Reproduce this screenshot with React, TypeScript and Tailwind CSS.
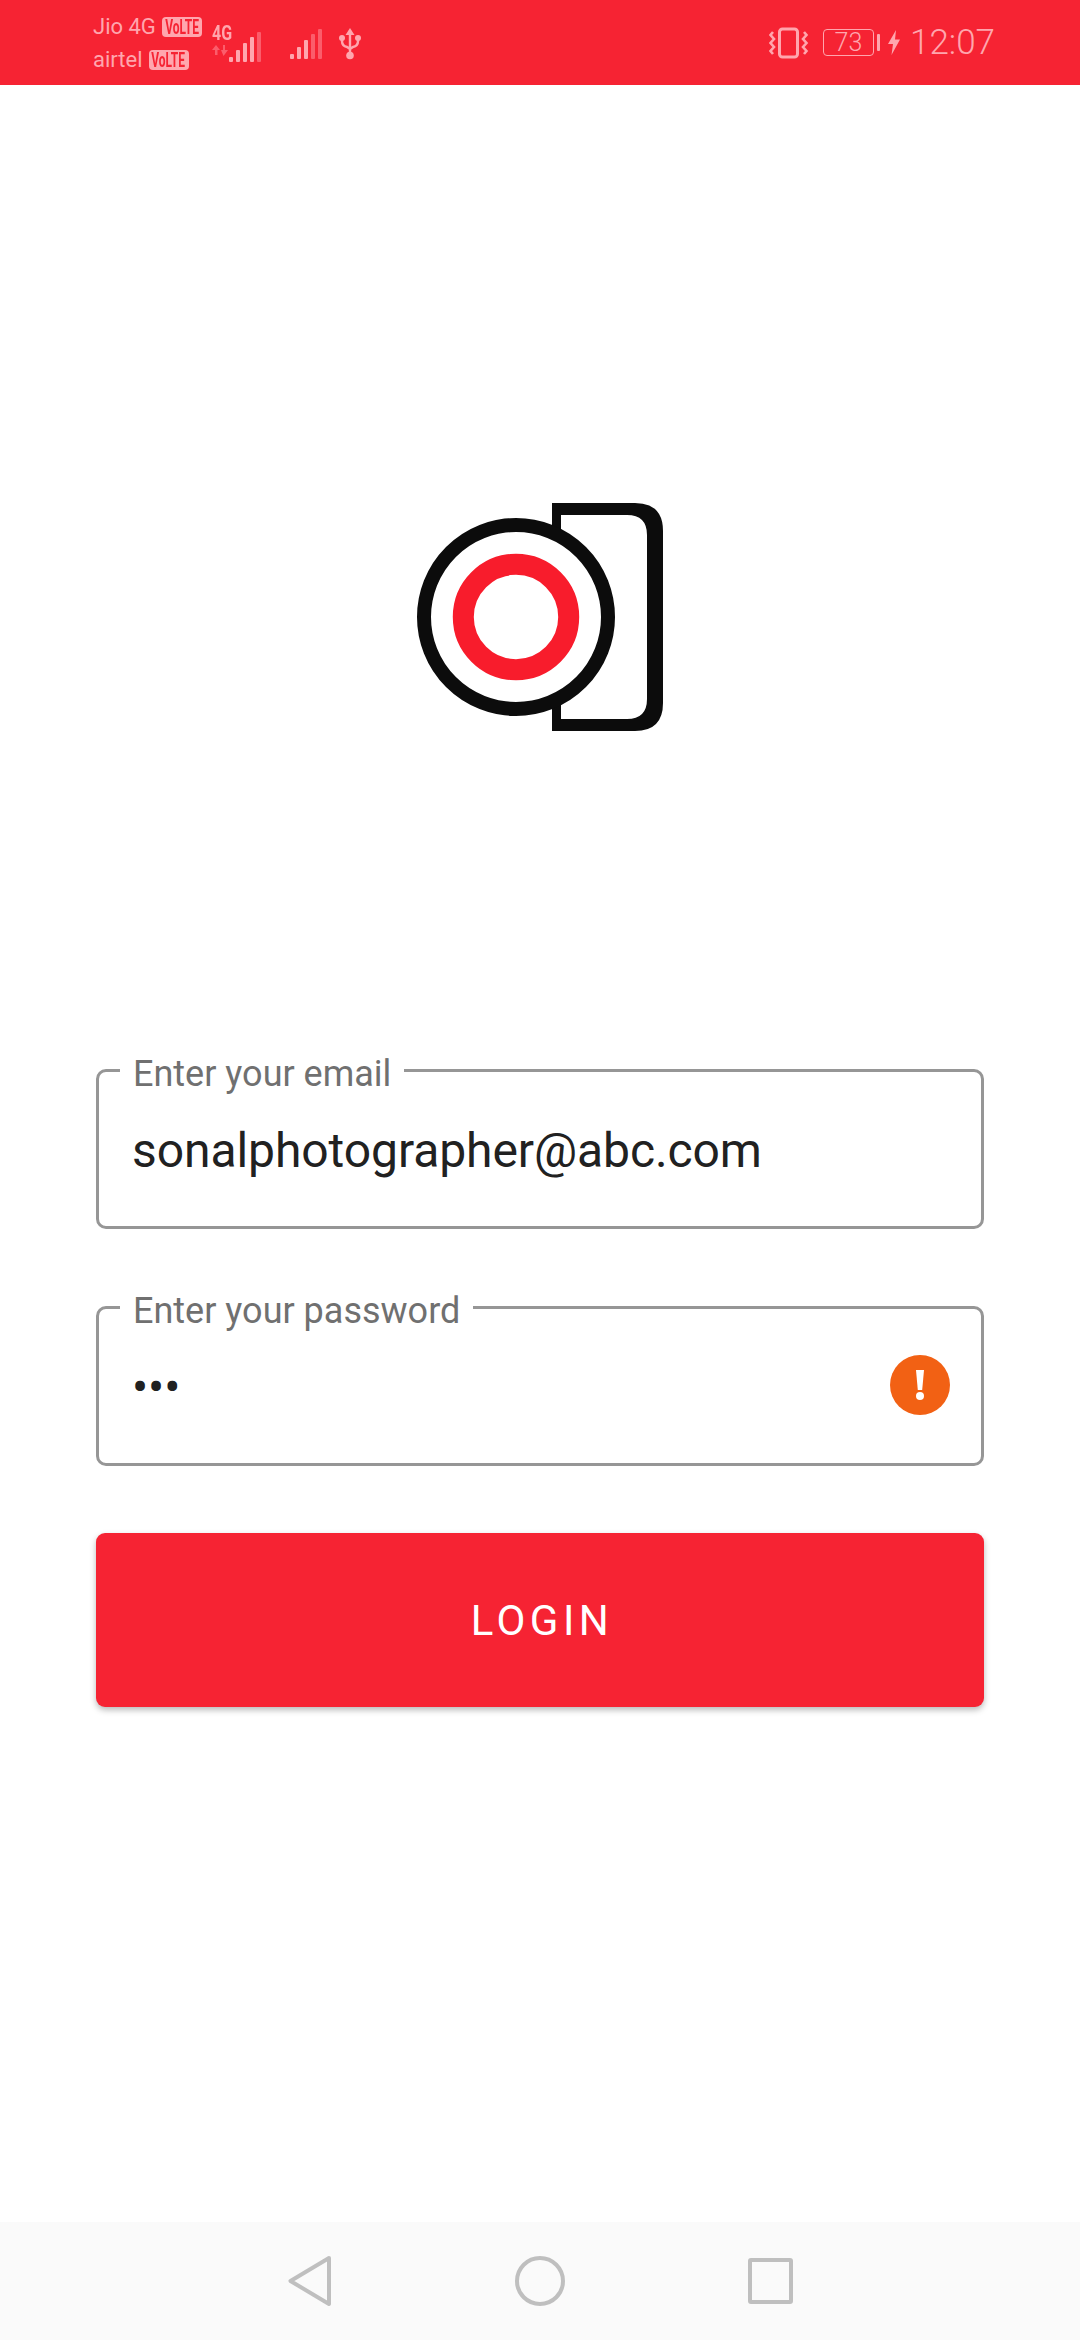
import React from "react";

const FONT = "font-['Roboto',sans-serif]";

const Volte = () => (
  <span className="flex h-[20px] w-[40px] items-center justify-center rounded-[4px] bg-[#ffa6ae]">
    <span className={`${FONT} scale-x-[.6] text-[20px] leading-none font-bold text-[#f62333]`}>VoLTE</span>
  </span>
);

const Bars = ({ on }: { on: number }) => (
  <svg width="33" height="30" viewBox="0 0 33 30">
    {[25, 18, 11, 5, 0].map((top, i) => (
      <rect key={i} x={i * 7} y={top} width="4" height={30 - top} rx="1" fill={i < on ? "#ffa6ae" : "#fb5d6b"} />
    ))}
  </svg>
);

const StatusBar = () => (
  <div className={`${FONT} flex h-[85px] shrink-0 items-center justify-between bg-[#f62333] pr-[85px] pl-[93px] text-[#ffa6ae]`}>
    <div className="flex items-center">
      <div className="flex w-[119px] flex-col gap-[13px] pt-[1px] text-[22px] leading-[20px]">
        <div className="flex items-center gap-[6px]">
          <span>Jio 4G</span>
          <Volte />
        </div>
        <div className="flex items-center gap-[6px]">
          <span>airtel</span>
          <Volte />
        </div>
      </div>
      <div className="relative mt-[3px] h-[40px] w-[50px]">
        <span className="absolute top-[0px] left-0 origin-left scale-x-[.8] text-[20px] leading-[19px] font-bold">4G</span>
        <svg className="absolute top-[21px] left-0" width="17" height="12" viewBox="0 0 17 12">
          <path d="M0 5 L4 0 L8 5 H5.5 V10 H3 V5 Z M9 5 H11 V0 H13 V5 H16 L11.5 11 Z" fill="#fb5d6b" />
        </svg>
        <div className="absolute top-[8px] left-[17px]">
          <Bars on={4} />
        </div>
      </div>
      <div className="mt-[3px] ml-[28px] flex">
        <Bars on={3} />
      </div>
      <svg className="mt-[2px] ml-[16px]" width="22" height="32" viewBox="0 0 22 32">
        <path d="M11 0 L15.5 7 H6.5 Z" fill="#ffa6ae" />
        <path d="M11 5 V27 M3 11 V13 Q3 18 8 19 L11 21 M19 11 V13 Q19 18 14 19 L11 21" stroke="#ffa6ae" strokeWidth="2.4" fill="none" />
        <circle cx="3" cy="10" r="3" fill="#ffa6ae" />
        <circle cx="19" cy="10" r="3" fill="#ffa6ae" />
        <circle cx="11" cy="27.5" r="3.8" fill="#ffa6ae" />
      </svg>
    </div>
    <div className="flex items-center">
      <svg width="40" height="32" viewBox="0 0 40 32">
        <rect x="10.5" y="2" width="18" height="28" rx="3" fill="none" stroke="#ffa6ae" strokeWidth="3" />
        <path d="M4 5 L1.5 8 L5 12 L1.5 16 L5 20 L1.5 24 L4 27" fill="none" stroke="#ffa6ae" strokeWidth="2.6" />
        <path d="M35 5 L37.5 8 L34 12 L37.5 16 L34 20 L37.5 24 L35 27" fill="none" stroke="#ffa6ae" strokeWidth="2.6" />
      </svg>
      <div className="ml-[14px] flex h-[27px] w-[51px] items-center justify-center rounded-[4px] border-[1.5px] border-[#ffa6ae] text-[25px] leading-none font-light">
        73
      </div>
      <div className="ml-[3px] h-[17px] w-[3px] rounded-[1px] bg-[#ffa6ae]" />
      <svg className="ml-[8px]" width="12" height="25" viewBox="0 0 12 25">
        <path d="M8 0 L0 14 H5 L3.5 25 L12 9.5 H7 Z" fill="#ffa6ae" />
      </svg>
      <span className="ml-[10px] text-[35px] leading-none font-light">12:07</span>
    </div>
  </div>
);

const Logo = () => (
  <svg className="mx-auto blur-[0.7px]" width="286" height="244" viewBox="397 495 286 244">
    <path
      fillRule="evenodd"
      fill="#0c0c0c"
      d="M552 503 H635 Q663 503 663 531 V703 Q663 731 635 731 H552 V700 H561 V719 H627 Q647 719 647 699 V535 Q647 515 627 515 H561 V530 H552 Z"
    />
    <circle cx="516" cy="617" r="92" fill="#fff" stroke="#0c0c0c" strokeWidth="14" />
    <circle cx="516" cy="617" r="52.7" fill="none" stroke="#f81c2c" strokeWidth="21" />
  </svg>
);

const Field = ({ label, children }: { label: string; children: React.ReactNode }) => (
  <fieldset className="h-[177px] rounded-[10px] border-[3px] border-[#969696] pr-[31px] pl-[33px]">
    <legend className="relative top-[4px] ml-[-12px] px-[13px] text-[36px] leading-[36px] text-[#707070]">{label}</legend>
    <div className="flex h-[120px] items-center justify-between pt-[5px] text-[48px] leading-[56px] tracking-[-0.08px] text-[#212121]">{children}</div>
  </fieldset>
);

const NavBar = () => (
  <div className="flex h-[118px] shrink-0 items-center justify-center bg-[#fafafa]">
    <div className="flex w-[230px] justify-center">
      <svg width="44" height="52" viewBox="0 0 44 52" fill="none" stroke="#bfbfbf" strokeWidth="4" strokeLinejoin="round">
        <path d="M41 3 L2.5 26 L41 49 Z" />
      </svg>
    </div>
    <div className="flex w-[230px] justify-center">
      <div className="h-[50px] w-[50px] rounded-full border-[4px] border-[#bfbfbf]" />
    </div>
    <div className="flex w-[230px] justify-center">
      <div className="h-[46px] w-[45px] rounded-[3px] border-[4px] border-[#bfbfbf]" />
    </div>
  </div>
);

export default function App() {
  return (
    <div className={`${FONT} flex h-[2340px] w-[1080px] flex-col overflow-hidden bg-white`}>
      <StatusBar />
      <div className="flex flex-1 flex-col px-[96px] pt-[410px]">
        <Logo />
        <form className="mt-[313px] flex flex-col gap-[60px]">
          <Field label="Enter your email">
            <span>sonalphotographer@abc.com</span>
          </Field>
          <Field label="Enter your password">
            <span>•••</span>
            <span className="mb-[6px] flex h-[60px] w-[60px] items-center justify-center rounded-full bg-[#f26114]">
              <svg width="10" height="30" viewBox="0 0 10 30">
                <path d="M1 0 H9 L7.2 20 H2.8 Z" fill="#fff" />
                <circle cx="5" cy="26" r="4" fill="#fff" />
              </svg>
            </span>
          </Field>
        </form>
        <button className="mt-[67px] h-[174px] rounded-[9px] bg-[#f62333] pl-[4px] text-[42px] tracking-[4.5px] text-white shadow-[0_3px_6px_rgba(0,0,0,0.28)]">
          LOGIN
        </button>
      </div>
      <NavBar />
    </div>
  );
}
